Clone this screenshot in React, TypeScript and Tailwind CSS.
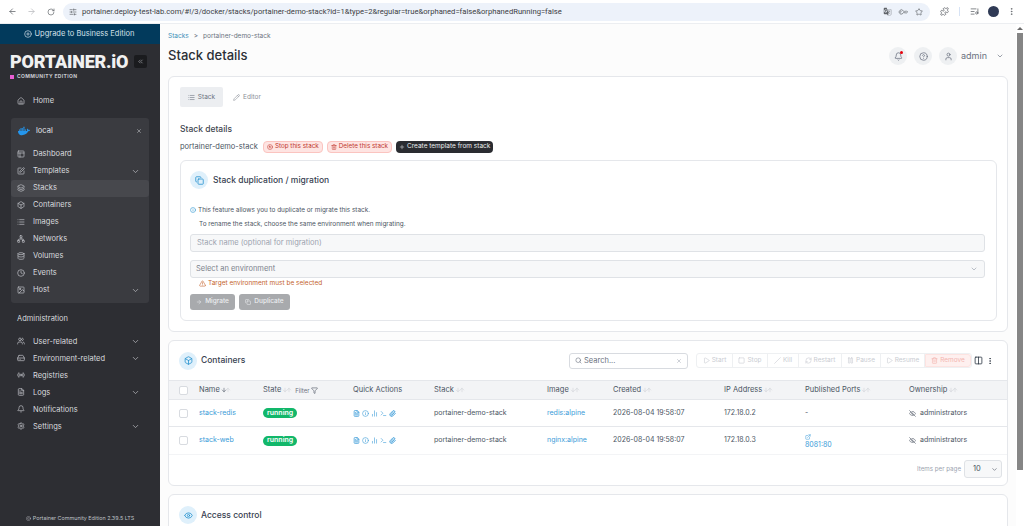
import React from "react";
import {
  ArrowLeft, ArrowRight, RotateCw, SlidersHorizontal, KeyRound, Star, Puzzle, ListMusic, MoreVertical,
  PlusCircle, ChevronsLeft, Home, X, PanelsTopLeft, SquarePen, Layers, Box, List, Network, Database, Clock, ChevronDown,
  Image as ImageIcon, Users, HardDrive, Radio, FileText, Bell, Settings, Copyright, HelpCircle, User, Pencil, StopCircle,
  Trash2, Plus, Copy, Info, AlertTriangle, ArrowRight as ArrowR, Search, Play, Square, Slash, RefreshCw, Pause, Columns2,
  ArrowDown, ArrowUp, Filter, BarChart2, Terminal, Paperclip, EyeOff, ExternalLink, Eye,
} from "lucide-react";
import { FaDocker } from "react-icons/fa";
import { MdOutlineGTranslate } from "react-icons/md";

type NavItem = { label: string; icon: React.ElementType; chevron?: boolean; active?: boolean };

const envItems: NavItem[] = [
  { label: "Dashboard", icon: PanelsTopLeft },
  { label: "Templates", icon: SquarePen, chevron: true },
  { label: "Stacks", icon: Layers, active: true },
  { label: "Containers", icon: Box },
  { label: "Images", icon: List },
  { label: "Networks", icon: Network },
  { label: "Volumes", icon: Database },
  { label: "Events", icon: Clock },
  { label: "Host", icon: ImageIcon, chevron: true },
];

const adminItems: NavItem[] = [
  { label: "User-related", icon: Users, chevron: true },
  { label: "Environment-related", icon: HardDrive, chevron: true },
  { label: "Registries", icon: Radio },
  { label: "Logs", icon: FileText, chevron: true },
  { label: "Notifications", icon: Bell },
  { label: "Settings", icon: Settings, chevron: true },
];

const NavRow = ({ item }: { item: NavItem }) => {
  const Icon = item.icon;
  return (
    <div className={`flex h-[17px] items-center rounded-[3px] pl-[6px] pr-[9px] ${item.active ? "bg-[#47484d]" : ""}`}>
      <Icon size={8} className="text-[#c4c6cb]" />
      <span className="ml-[8px] flex-1 text-[7.5px] text-[#d8dade]">{item.label}</span>
      {item.chevron && <ChevronDown size={9} className="text-[#b5b7bc]" />}
    </div>
  );
};

const Sidebar = () => (
  <aside className="flex h-full w-[160px] shrink-0 flex-col bg-[#2d2e33]">
    <div className="flex h-[20px] items-center justify-center gap-[3px] bg-[#023a5c] pr-[2px] text-[7.5px] text-[#d5e0e8]">
      <PlusCircle size={8} />
      Upgrade to Business Edition
    </div>
    <div className="flex items-start pl-[10px] pr-[13px] pt-[9px]">
      <div className="flex-1">
        <div className="text-[18px] font-black leading-[17px] tracking-[-0.2px] text-[#f1f1f1] [font-family:Roboto,sans-serif]">
          PORTAINER.iO
        </div>
        <div className="mt-[3px] flex items-center gap-[3px]">
          <span className="h-[4px] w-[4px] bg-[#e85fd3]" />
          <span className="text-[5px] font-bold tracking-[0.35px] text-[#c9cbd0]">COMMUNITY EDITION</span>
        </div>
      </div>
      <div className="mt-[2px] flex h-[13px] w-[13px] items-center justify-center rounded-[2px] bg-[#1a1b1e]">
        <ChevronsLeft size={7} className="text-[#b5b7bc]" />
      </div>
    </div>
    <div className="mt-[12px] px-[11px]">
      <NavRow item={{ label: "Home", icon: Home }} />
    </div>
    <div className="mx-[11px] mt-[8px] rounded-[3px] bg-[#3a3b40] pb-[4px]">
      <div className="flex h-[24px] items-center pl-[7px] pr-[7px] pt-[2px]">
        <FaDocker size={12} className="text-[#2496ed]" />
        <span className="ml-[6px] flex-1 text-[7.5px] text-[#e2e4e8]">local</span>
        <X size={6} className="text-[#d0d2d6]" />
      </div>
      <div className="mt-[4px]">
        {envItems.map((i) => (
          <NavRow key={i.label} item={i} />
        ))}
      </div>
    </div>
    <div className="ml-[17px] mt-[10px] text-[7.5px] text-[#d8dade]">Administration</div>
    <div className="mt-[9px] px-[11px]">
      {adminItems.map((i) => (
        <NavRow key={i.label} item={i} />
      ))}
    </div>
    <div className="mt-auto flex h-[15px] items-center justify-center gap-[2px] text-[5.4px] text-[#bfc1c6]">
      <Copyright size={5} />
      Portainer Community Edition 2.39.5 LTS
    </div>
  </aside>
);

const BrowserBar = () => (
  <div className="flex h-[24px] shrink-0 items-center border-b border-[#eceef1] bg-white pl-[8px] pr-[8px] text-[#5f6368]">
    <ArrowLeft size={9} />
    <ArrowRight size={9} className="ml-[10px] text-[#b8babd]" />
    <RotateCw size={8} className="ml-[11px]" />
    <div className="ml-[8px] flex h-[18px] w-[565px] flex-1 items-center rounded-full bg-[#edf2fa] pl-[6px] pr-[7px]">
      <SlidersHorizontal size={8} />
      <span className="ml-[5px] flex-1 text-[7.65px] text-[#3c4043] [font-family:Roboto,sans-serif]">
        portainer.deploy-test-lab.com/#!/3/docker/stacks/portainer-demo-stack?id=1&amp;type=2&amp;regular=true&amp;orphaned=false&amp;orphanedRunning=false
      </span>
      <MdOutlineGTranslate size={9} />
      <KeyRound size={8} className="ml-[7px] rotate-[-135deg]" />
      <Star size={8} className="ml-[8px]" />
    </div>
    <Puzzle size={9} className="ml-[10px]" />
    <span className="ml-[10px] h-[9px] w-px bg-[#d7e3f5]" />
    <ListMusic size={9} className="ml-[10px]" />
    <span className="ml-[9px] h-[11px] w-[11px] rounded-full bg-[#2f3a55]" />
    <MoreVertical size={9} className="ml-[8px]" />
  </div>
);

const CircleIcon = ({ icon: Icon }: { icon: React.ElementType }) => (
  <span className="flex h-[18px] w-[18px] items-center justify-center rounded-full bg-[#dff0fb]">
    <Icon size={9} className="text-[#1b8ccc]" />
  </span>
);

const Sort = ({ active }: { active?: boolean }) => (
  <span className="ml-[1px] flex items-center">
    <ArrowDown size={6} className={active ? "text-[#374151]" : "text-[#c9ccd2]"} />
    <ArrowUp size={6} className="-ml-[2px] text-[#c9ccd2]" />
  </span>
);

const Badge = ({ icon: Icon, label }: { icon: React.ElementType; label: string }) => (
  <span className="flex h-[12px] items-center gap-[2px] rounded-[4px] border border-[#fbc4c0] bg-[#fee4e2] px-[3px] text-[6.3px] text-[#c0392f]">
    <Icon size={6} />
    {label}
  </span>
);

const grid = "grid grid-cols-[20px_64px_90px_81px_113px_66px_111px_81px_104px_1fr] items-center pl-[10px]";

const Check = () => <span className="block h-[9px] w-[9px] rounded-[2px] border border-[#d8dbe0] bg-white" />;

const QuickActions = () => (
  <span className="flex items-center gap-[2px] text-[#3a9bd8]">
    <FileText size={7} strokeWidth={2.5} />
    <Info size={7} />
    <BarChart2 size={7} />
    <Terminal size={7} />
    <Paperclip size={7} strokeWidth={3} />
  </span>
);

const Row = ({ name, image, ip, port, border }: { name: string; image: string; ip: string; port?: string; border?: boolean }) => (
  <div className={`${grid} h-[27px] text-[7px] text-[#4b5563] ${border ? "border-b border-[#e5e7eb]" : ""}`}>
    <Check />
    <span className="text-[#3a9bd8]">{name}</span>
    <span>
      <span className="inline-flex h-[10px] items-center rounded-full bg-[#12b76a] px-[4px] text-[7px] font-semibold text-white">running</span>
    </span>
    <QuickActions />
    <span>portainer-demo-stack</span>
    <span className="text-[#3a9bd8]">{image}</span>
    <span>2026-08-04 19:58:07</span>
    <span>{ip}</span>
    {port ? (
      <span className="leading-[7px] text-[#3a9bd8]">
        <ExternalLink size={6} className="mb-[1px]" />
        {port}
      </span>
    ) : (
      <span>-</span>
    )}
    <span className="flex items-center gap-[4px]">
      <EyeOff size={7} />
      administrators
    </span>
  </div>
);

const toolbar: [React.ElementType, string, string][] = [
  [Play, "Start", "w-[36px]"],
  [Square, "Stop", "w-[35px]"],
  [Slash, "Kill", "w-[31px]"],
  [RefreshCw, "Restart", "w-[43px]"],
  [Pause, "Pause", "w-[39px]"],
  [Play, "Resume", "w-[44px]"],
];

const Head = ({ label, active }: { label: string; active?: boolean }) => (
  <span className="flex items-center">
    {label}
    <Sort active={active} />
  </span>
);

const Main = () => (
  <main className="min-w-0 flex-1 overflow-hidden bg-[#fcfcfc] pl-[8px] pr-[8px]">
    <div className="flex h-[52px]">
      <div className="flex-1 pt-[8px]">
        <div className="text-[6.5px] leading-[9px] text-[#6b7280]">
          <span className="text-[#3d8fb8]">Stacks</span>
          <span className="mx-[5px]">&gt;</span>
          portainer-demo-stack
        </div>
        <h1 className="mt-[6px] text-[13px] font-medium leading-[17px] text-[#2b2f36]">Stack details</h1>
      </div>
      <div className="flex items-center pr-[4px] pt-[12px] text-[#6b7280]">
        <span className="relative flex h-[18px] w-[18px] items-center justify-center rounded-full bg-[#eef0f2]">
          <Bell size={9} />
          <span className="absolute right-[4px] top-[4px] h-[3px] w-[3px] rounded-full bg-red-600" />
        </span>
        <span className="ml-[7px] flex h-[18px] w-[18px] items-center justify-center rounded-full bg-[#eef0f2]">
          <HelpCircle size={9} />
        </span>
        <span className="ml-[7px] flex h-[18px] w-[18px] items-center justify-center rounded-full bg-[#eef0f2]">
          <User size={9} />
        </span>
        <span className="ml-[4px] text-[9px]">admin</span>
        <ChevronDown size={8} className="ml-[9px]" />
      </div>
    </div>

    <section className="h-[256px] rounded-[6px] border border-[#e5e7eb] bg-white pl-[11px] pr-[10px] pt-[10px]">
      <div className="flex h-[20px] text-[6.5px] text-[#6b7280]">
        <span className="flex w-[43px] items-center justify-center gap-[3px] rounded-[2px] bg-[#eceef1] pt-[1px]">
          <List size={7} />
          Stack
        </span>
        <span className="ml-[10px] flex items-center gap-[3px] pt-[1px] text-[#8b9099]">
          <Pencil size={7} />
          Editor
        </span>
      </div>
      <div className="mt-[17px] text-[8.5px] font-medium leading-[11px] text-[#3f4650]">Stack details</div>
      <div className="mt-[6px] flex items-center gap-[4px] text-[7.5px] text-[#4b5563]">
        <span className="mr-[1px]">portainer-demo-stack</span>
        <Badge icon={StopCircle} label="Stop this stack" />
        <Badge icon={Trash2} label="Delete this stack" />
        <span className="flex h-[12px] items-center gap-[2px] rounded-[4px] bg-[#2a2c31] px-[3px] text-[6.5px] text-[#eceef0]">
          <Plus size={6} />
          Create template from stack
        </span>
      </div>
      <div className="mt-[7px] h-[161px] rounded-[6px] border border-[#e5e7eb] bg-white pl-[9px] pr-[11px] pt-[10px]">
        <div className="flex items-center gap-[5px]">
          <CircleIcon icon={Copy} />
          <span className="text-[8.5px] font-medium text-[#374151]">Stack duplication / migration</span>
        </div>
        <div className="mt-[17px] flex items-center gap-[2px] text-[6.4px] leading-[8px] text-[#4b5563]">
          <Info size={6} className="text-[#1b8ccc]" />
          This feature allows you to duplicate or migrate this stack.
        </div>
        <div className="ml-[9px] mt-[6px] text-[6.4px] leading-[8px] text-[#4b5563]">
          To rename the stack, choose the same environment when migrating.
        </div>
        <div className="mt-[6px] flex h-[18px] items-center rounded-[3px] border border-[#dfe2e6] bg-[#f7f8f9] pl-[6px] text-[7.5px] text-[#9ca3af]">
          Stack name (optional for migration)
        </div>
        <div className="mt-[8px] flex h-[18px] items-center justify-between rounded-[3px] border border-[#dfe2e6] bg-[#f7f8f9] pl-[5px] pr-[6px] text-[7.5px] text-[#7c828c]">
          Select an environment
          <ChevronDown size={8} className="text-[#9ca3af]" />
        </div>
        <div className="ml-[9px] mt-[1px] flex items-center gap-[2px] text-[6.5px] leading-[9px] text-[#c4632d]">
          <AlertTriangle size={7} />
          Target environment must be selected
        </div>
        <div className="mt-[6px] flex gap-[4px] text-[6.5px] font-medium text-[#eceef0]">
          <span className="flex h-[16px] w-[45px] items-center justify-center gap-[3px] rounded-[3px] bg-[#a8aaad]">
            <ArrowR size={6} />
            Migrate
          </span>
          <span className="flex h-[16px] w-[51px] items-center justify-center gap-[3px] rounded-[3px] bg-[#a8aaad]">
            <Copy size={6} />
            Duplicate
          </span>
        </div>
      </div>
    </section>

    <section className="mt-[8px] h-[146px] rounded-[6px] border border-[#e5e7eb] bg-white">
      <div className="flex h-[39px] items-center pl-[10px] pr-[13px]">
        <CircleIcon icon={Box} />
        <span className="ml-[4px] flex-1 text-[8.5px] font-medium text-[#374151]">Containers</span>
        <div className="flex h-[16px] w-[119px] items-center rounded-[3px] border border-[#d8dbe0] pl-[5px] pr-[5px] text-[7.5px] text-[#6b7280]">
          <Search size={7} />
          <span className="ml-[2px] flex-1">Search...</span>
          <X size={6} className="text-[#9ca3af]" />
        </div>
        <div className="ml-[8px] flex h-[15px] items-center rounded-[3px] border border-[#eef0f2] text-[6.5px] text-[#c9ccd2]">
          {toolbar.map(([Icon, label, width]) => (
            <span key={label} className={`flex h-full items-center justify-center gap-[2px] border-r border-[#eef0f2] ${width}`}>
              <Icon size={7} />
              {label}
            </span>
          ))}
          <span className="flex h-full w-[46px] items-center justify-center gap-[2px] rounded-r-[3px] border border-[#fde3e1] bg-[#fef0ef] text-[#f3b5b0]">
            <Trash2 size={7} />
            Remove
          </span>
        </div>
        <Columns2 size={9} className="ml-[2px] text-[#1f2937]" />
        <MoreVertical size={8} className="ml-[3px] text-[#1f2937]" />
      </div>
      <div className={`${grid} h-[20px] border-y border-[#e5e7eb] bg-[#f3f4f6] text-[7.5px] text-[#4b5563]`}>
        <Check />
        <Head label="Name" active />
        <span className="flex items-center">
          State
          <Sort />
          <span className="ml-[3px] text-[6px] text-[#6b7280]">Filter</span>
          <Filter size={7} className="ml-[2px]" />
        </span>
        <span>Quick Actions</span>
        <Head label="Stack" />
        <Head label="Image" />
        <Head label="Created" />
        <Head label="IP Address" />
        <Head label="Published Ports" />
        <Head label="Ownership" />
      </div>
      <Row name="stack-redis" image="redis:alpine" ip="172.18.0.2" border />
      <Row name="stack-web" image="nginx:alpine" ip="172.18.0.3" port="8081:80" />
      <div className="flex items-center justify-end border-t border-[#f3f4f6] pr-[5px] pt-[5px] text-[6.2px] text-[#9ca3af]">
        Items per page
        <span className="ml-[3px] flex h-[18px] w-[38px] items-center justify-between rounded-[3px] border border-[#dfe2e6] bg-[#f7f8f9] pl-[8px] pr-[3px] text-[7.5px] text-[#4b5563]">
          10
          <ChevronDown size={7} />
        </span>
      </div>
    </section>

    <section className="mt-[8px] h-[60px] rounded-[6px] border border-[#e5e7eb] bg-white pl-[10px] pt-[11px]">
      <div className="flex items-center gap-[4px]">
        <CircleIcon icon={Eye} />
        <span className="text-[8.5px] font-medium text-[#374151]">Access control</span>
      </div>
    </section>
  </main>
);

const Scrollbar = () => (
  <div className="flex w-[8px] shrink-0 flex-col items-center bg-white pt-[3px]">
    <span className="h-0 w-0 border-x-[3px] border-b-[3px] border-x-transparent border-b-[#6b6b6b]" />
    <span className="mt-[3px] h-[437px] w-[6px] bg-[#858585]" />
  </div>
);

export default function App() {
  return (
    <div className="flex h-[526px] w-[1024px] flex-col overflow-hidden [font-family:Inter,sans-serif]">
      <BrowserBar />
      <div className="flex min-h-0 flex-1">
        <Sidebar />
        <Main />
        <Scrollbar />
      </div>
    </div>
  );
}
